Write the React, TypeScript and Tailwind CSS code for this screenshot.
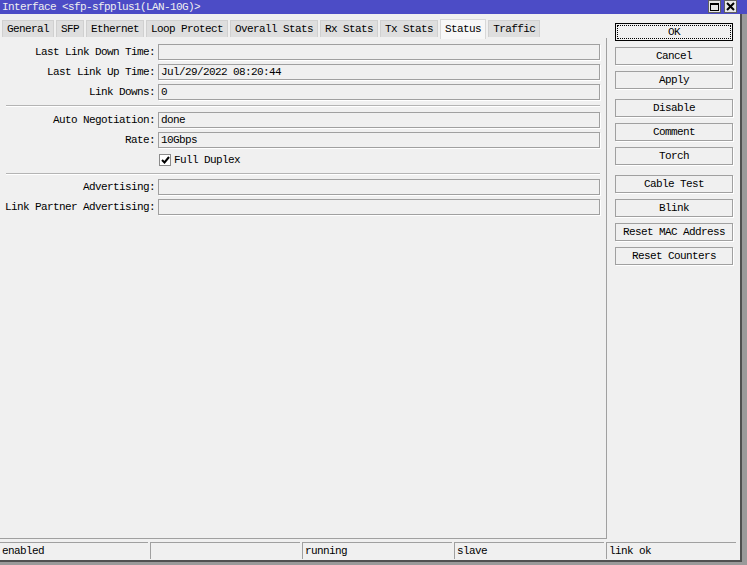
import React from 'react';

const tabs = ['General', 'SFP', 'Ethernet', 'Loop Protect', 'Overall Stats', 'Rx Stats', 'Tx Stats', 'Status', 'Traffic'];

const buttonGroups = [
  ['OK', 'Cancel', 'Apply'],
  ['Disable', 'Comment', 'Torch'],
  ['Cable Test', 'Blink', 'Reset MAC Address', 'Reset Counters'],
];

function Field({ label, value }: { label: string; value?: string }) {
  return (
    <div className="flex items-center h-4">
      <div className="w-[158px] shrink-0 text-right pr-[3px]">{label}</div>
      <div className="flex-1 h-4 mr-[6px] border border-[#a0a0a0] bg-[#f0f0f0] px-[2px] leading-[14px] shadow-[1px_1px_0_#ffffff]">
        {value}
      </div>
    </div>
  );
}

function Sep() {
  return <div className="h-px bg-[#b4b4b4] border-b border-white mr-[6px] ml-[6px] box-content" />;
}

export default function App() {
  return (
    <div className="w-[747px] h-[565px] bg-[#9a9a9a] overflow-hidden text-[11px] tracking-[-0.6px] text-black font-['Liberation_Mono','DejaVu_Sans_Mono',monospace]">
      {/* title bar */}
      <div className="h-[14px] bg-[#4c4cc6] flex items-center justify-between pl-[2px] pr-[10px]">
        <span className="text-[#f0f0f0] leading-[14px]">Interface &lt;sfp-sfpplus1(LAN-10G)&gt;</span>
        <div className="flex gap-[3px] h-[14px]">
          <div className="w-[13px] h-[13px] bg-[#e8e8e8] border border-[#606060] flex items-center justify-center">
            <div className="w-[9px] h-[8px] border border-black border-t-2" />
          </div>
          <div className="w-[13px] h-[13px] bg-[#e8e8e8] border border-[#606060] flex items-center justify-center">
            <svg width="9" height="9" viewBox="0 0 9 9">
              <path d="M1 1L8 8M8 1L1 8" stroke="black" strokeWidth="2" />
            </svg>
          </div>
        </div>
      </div>

      <div className="w-[742px] h-[548px] bg-[#f0f0f0] border-r-[2px] border-b-[2px] border-[#505050] flex flex-col">
        <div className="flex flex-1">
          {/* left pane */}
          <div className="w-[607px] flex flex-col">
            <div className="flex items-end h-[24px] pl-[2px] gap-[2px]">
              {tabs.map((t) =>
                t === 'Status' ? (
                  <div key={t} className="h-[20px] px-[4px] bg-[#f7f7f7] border border-b-0 border-[#d8d8d8] leading-[18px] mb-[-1px]">
                    {t}
                  </div>
                ) : (
                  <div key={t} className="h-[17px] px-[4px] bg-[#dedede] border border-b-0 border-[#d0d0d0] leading-[16px] mb-[1px]">
                    {t}
                  </div>
                )
              )}
            </div>
            <div className="flex-1 border-r border-b border-[#a0a0a0] flex flex-col pt-[6px] gap-[4px]">
              <Field label="Last Link Down Time:" />
              <Field label="Last Link Up Time:" value="Jul/29/2022 08:20:44" />
              <Field label="Link Downs:" value="0" />
              <div className="py-[1px]"><Sep /></div>
              <Field label="Auto Negotiation:" value="done" />
              <Field label="Rate:" value="10Gbps" />
              <div className="flex items-center h-4 pl-[159px] gap-[3px]">
                <div className="w-[12px] h-[12px] border border-[#8a8a8a] bg-white flex items-center justify-center">
                  <svg width="9" height="8" viewBox="0 0 9 8">
                    <path d="M1 4L3.5 6.5L8 1" stroke="black" strokeWidth="2" fill="none" />
                  </svg>
                </div>
                <span>Full Duplex</span>
              </div>
              <div className="pt-[1px]"><Sep /></div>
              <Field label="Advertising:" />
              <Field label="Link Partner Advertising:" />
            </div>
          </div>

          {/* buttons */}
          <div className="flex-1 pl-[8px] pt-[9px] flex flex-col gap-[10px]">
            {buttonGroups.map((g, i) => (
              <div key={i} className="flex flex-col gap-[6px]">
                {g.map((b) =>
                  b === 'OK' ? (
                    <div key={b} className="w-[118px] h-[18px] border border-black p-px">
                      <div className="h-full border border-dotted border-black flex items-center justify-center">{b}</div>
                    </div>
                  ) : (
                    <div key={b} className="w-[118px] h-[18px] border border-[#a0a0a0] flex items-center justify-center shadow-[1px_1px_0_#ffffff]">
                      {b}
                    </div>
                  )
                )}
              </div>
            ))}
          </div>
        </div>

        {/* status bar */}
        <div className="h-[21px] flex gap-[2px] pt-[3px] pb-[1px] pr-[4px]">
          {['enabled', '', 'running', 'slave', 'link ok'].map((s, i) => (
            <div
              key={i}
              className={`${i === 4 ? 'flex-1' : i === 0 ? 'w-[148px]' : 'w-[150px]'} ${i === 0 ? 'border-l-0' : 'border-l'} border-t border-[#a0a0a0] pl-[2px] leading-[16px]`}
            >
              {s}
            </div>
          ))}
        </div>
      </div>
    </div>
  );
}
